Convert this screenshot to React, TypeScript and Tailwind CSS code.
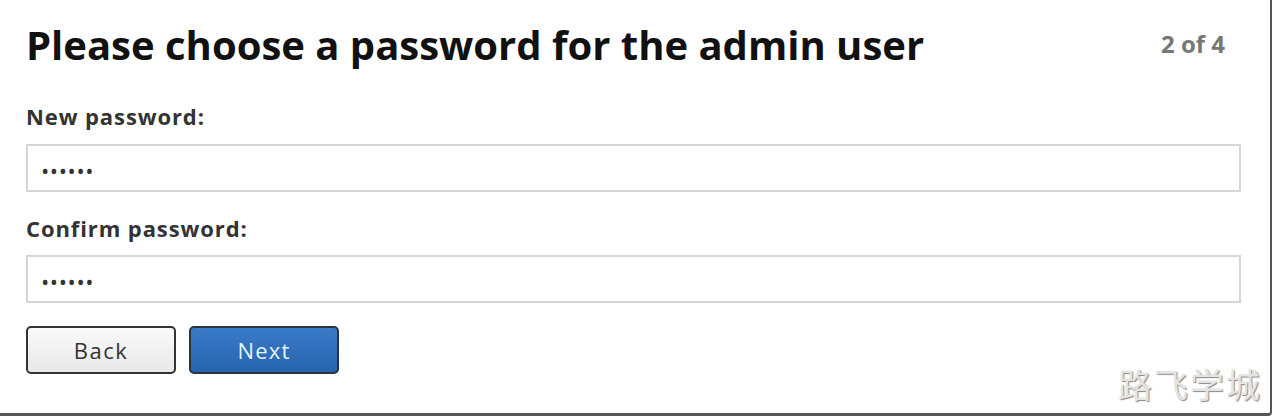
import React from "react";

export default function App() {
  const font = { fontFamily: "'Open Sans', 'Liberation Sans', sans-serif" };
  return (
    <div className="w-[1272px] h-[416px] bg-white border-r-[2px] border-b-[3px] border-[#555] rounded-br-[4px] relative overflow-hidden" style={font}>
      <div className="pl-[26px] pr-[29px]">
        <div className="flex items-start justify-between pt-[21px]">
          <h1 className="text-[40px] leading-[48px] font-bold text-[#111]">Please choose a password for the admin user</h1>
          <div className="text-[24px] leading-[30px] font-bold text-[#777] mt-[8px] mr-[16px]">2 of 4</div>
        </div>
        <div className="mt-[35px] text-[22px] font-bold text-[#333] leading-[24px] tracking-[0.9px]">New password:</div>
        <div className="mt-[16px] h-[48px] border-2 border-[#d6d6d6] flex items-center pl-[13px] pt-[4px] text-[#333] text-[22px] tracking-[0.6px]">••••••</div>
        <div className="mt-[24px] text-[22px] font-bold text-[#333] leading-[24px] tracking-[0.9px]">Confirm password:</div>
        <div className="mt-[15px] h-[48px] border-2 border-[#d6d6d6] flex items-center pl-[13px] pt-[4px] text-[#333] text-[22px] tracking-[0.6px]">••••••</div>
        <div className="mt-[23px] flex gap-[13px]">
          <button className="w-[150px] h-[48px] rounded-[5px] border-2 border-[#333] bg-gradient-to-b from-[#fafafa] to-[#e8e8e8] text-[22px] text-[#333] tracking-[1.5px]">Back</button>
          <button className="w-[150px] h-[48px] rounded-[5px] border-2 border-[#2b3340] bg-gradient-to-b from-[#3a7bc8] to-[#2563ad] text-[22px] text-[#e8f2ff] tracking-[1.2px]">Next</button>
        </div>
      </div>
      <div className="absolute right-[8px] bottom-[4px] text-[34px] text-[#e4e4e4] tracking-[2px]" style={{ fontFamily: "'Noto Sans CJK SC', sans-serif", textShadow: "1px 1px 1px #888, -1px -1px 0 #fff" }}>路飞学城</div>
    </div>
  );
}
